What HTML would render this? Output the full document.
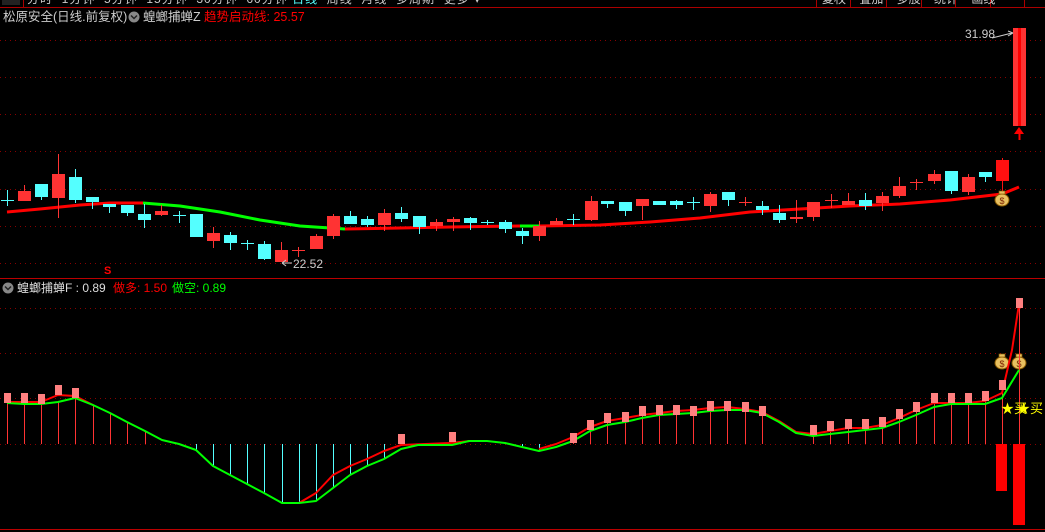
<!DOCTYPE html>
<html><head><meta charset="utf-8"><style>
html,body{margin:0;padding:0;background:#000;width:1045px;height:532px;overflow:hidden}
body{font-family:"Liberation Sans","Noto Sans CJK SC",sans-serif;position:relative}
.t{position:absolute;font-size:12px;white-space:nowrap;line-height:14px}
svg{position:absolute;left:0;top:0}
</style></head><body>
<svg id="s" width="1045" height="532" xmlns="http://www.w3.org/2000/svg"></svg>
<div class="t" style="left:27px;top:-8px;color:#ccc;letter-spacing:1px">分时 &nbsp;1分钟 &nbsp;5分钟 &nbsp;15分钟 &nbsp;30分钟 &nbsp;60分钟 <span style="color:#5ff">日线</span> &nbsp;周线 &nbsp;月线 &nbsp;多周期 &nbsp;更多 ▾</div>
<div class="t" style="left:822px;top:-8px;color:#ccc;word-spacing:10px">复权 叠加 多股 统计 画线 ・・・ 帮</div>
<div class="t" style="left:3px;top:10px;color:#ccc;font-size:12.5px">松原安全(日线.前复权)</div>
<div class="t" style="left:143px;top:10px;color:#ccc;font-size:12.5px">蝗螂捕蝉Z</div>
<div class="t" style="left:204px;top:10px;color:#f00;font-size:12.5px">趋势启动线: 25.57</div>
<div class="t" style="left:965px;top:27px;color:#ccc">31.98</div>
<div class="t" style="left:293px;top:257px;color:#ccc">22.52</div>
<div class="t" style="left:104px;top:264px;color:#f00;font-size:11px;font-weight:bold">S</div>
<div class="t" style="left:17px;top:281px;color:#ddd">蝗螂捕蝉F :<span> 0.89</span></div>
<div class="t" style="left:113px;top:281px;color:#f00">做多: 1.50</div>
<div class="t" style="left:172px;top:281px;color:#0f0">做空: 0.89</div>
<div class="t" style="left:1001px;top:402px;color:#ff0;font-size:13px">★买</div>
<div class="t" style="left:1017px;top:402px;color:#ff0;font-size:13px">★买</div>
<script>
var s=document.getElementById('s'),h='';
function L(x1,y1,x2,y2,c,w,d){h+='<line x1="'+x1+'" y1="'+y1+'" x2="'+x2+'" y2="'+y2+'" stroke="'+c+'" stroke-width="'+(w||1)+'"'+(d?' stroke-dasharray="'+d+'"':'')+'/>';}
function R(x,y,w,hh,c){h+='<rect x="'+x+'" y="'+y+'" width="'+w+'" height="'+hh+'" fill="'+c+'"/>';}
function P(pts,c,w){h+='<polyline points="'+pts.map(p=>p.join(',')).join(' ')+'" fill="none" stroke="'+c+'" stroke-width="'+w+'" stroke-linejoin="round"/>';}
function icon(x,y){h+='<circle cx="'+x+'" cy="'+y+'" r="5.5" fill="#888"/><polyline points="'+(x-3)+','+(y-1.5)+' '+x+','+(y+1.5)+' '+(x+3)+','+(y-1.5)+'" fill="none" stroke="#222" stroke-width="1.5"/>';}
// header
L(0,7.5,1045,7.5,'#a00',1);L(23.5,0,23.5,7,'#a00');
[816,850,886,921,955,990,1024].forEach(x=>L(x+.5,0,x+.5,7,'#a00'));
R(2,0,18,5,'#222');
icon(134,17);icon(8,288);
// grids
[40,77,114,151,189,226,263].forEach(y=>L(0,y+.5,1045,y+.5,'#800','1','1 4'));
[308,353,398,444].forEach(y=>L(0,y+.5,1045,y+.5,'#800','1','1 4'));
L(0,278.5,1045,278.5,'#b00',1);L(0,529.5,1045,529.5,'#b00',1);
// MA line top
P([[7,212],[40,209],[80,205],[110,203],[143,203]],'#f00',3);
P([[143,203],[180,206],[220,212],[260,220],[300,226],[330,228],[345,229]],'#0f0',3);
P([[345,229],[400,228],[450,227],[520,226]],'#f00',3);
P([[520,226],[540,226]],'#0f0',3);
P([[540,226],[600,225],[650,222],[700,218],[750,212],[800,209],[850,206],[900,204],[950,200],[1002,194],[1019,187]],'#f00',3);
var C=[[7,200,200,190,206,'c'],[24,191,201,185,201,'r'],[41,184,197,184,200,'c'],[58,174,198,154,218,'r'],[75,177,200,169,203,'c'],[92,197,202,197,209,'c'],[109,204,207,204,213,'c'],[127,205,213,205,216,'c'],[144,214,220,204,228,'c'],[161,211,215,205,216,'r'],[179,215,215,211,223,'c'],[196,214,237,214,237,'c'],[213,233,241,227,248,'r'],[230,235,243,232,250,'c'],[247,243,243,240,250,'c'],[264,244,259,241,260,'c'],[281,250,262,242,262,'r'],[298,250,250,247,257,'r'],[316,236,249,234,249,'r'],[333,216,236,214,239,'r'],[350,216,224,211,224,'c'],[367,219,225,216,227,'c'],[384,213,225,209,231,'r'],[401,213,219,207,222,'c'],[419,216,227,216,234,'c'],[436,222,226,219,231,'r'],[453,219,222,217,231,'r'],[470,218,223,217,230,'c'],[487,222,222,220,225,'c'],[505,222,229,220,233,'c'],[522,231,236,228,244,'c'],[539,226,236,221,241,'r'],[556,221,225,218,225,'r'],[573,219,219,214,225,'c'],[591,201,220,196,221,'r'],[607,201,204,201,208,'c'],[625,202,211,202,216,'c'],[642,199,206,199,220,'r'],[659,201,205,201,205,'c'],[676,201,205,200,209,'c'],[693,202,202,197,210,'c'],[710,194,206,192,212,'r'],[728,192,200,192,206,'c'],[745,202,202,197,206,'r'],[762,206,210,201,215,'c'],[779,213,220,205,223,'c'],[796,217,219,200,223,'r'],[813,202,217,202,221,'r'],[831,200,200,194,208,'r'],[848,201,205,193,205,'r'],[865,200,206,193,210,'c'],[882,196,203,192,211,'r'],[899,186,196,177,198,'r'],[916,182,182,179,190,'r'],[934,174,181,170,184,'r'],[951,171,191,171,194,'c'],[968,177,192,174,195,'r'],[985,172,177,172,182,'c'],[1002,160,181,158,191,'R']];
C.forEach(c=>{var col=c[5]=='c'?'#54ffff':(c[5]=='R'?'#ff1010':'#ff3333');
L(c[0]+.5,c[3],c[0]+.5,c[4],col,1);
if(c[1]==c[2])L(c[0]-6,c[1]+.5,c[0]+7,c[1]+.5,col,1);else R(c[0]-6,c[1],13,c[2]-c[1],col);});
R(1013,28,13,98,'#ff3333');R(1018,28,3,98,'#f00');
h+='<polygon points="1019,127 1014,134 1024,134" fill="#f00"/>';L(1019.5,133,1019.5,140,'#f00',2);
L(992,38,1012,33,'#ccc',1);L(1008,31,1013,33,'#ccc',1);L(1008,36,1013,33,'#ccc',1);
L(282,263,292,263,'#ccc',1);L(282,263,286,260,'#ccc');L(282,263,286,266,'#ccc');
function bag(x,y){h+='<ellipse cx="'+x+'" cy="'+(y+2)+'" rx="7" ry="6" fill="#e8c060" stroke="#8a5a00"/><rect x="'+(x-3)+'" y="'+(y-7)+'" width="6" height="3" fill="#e8c060" stroke="#8a5a00" stroke-width=".7"/><text x="'+x+'" y="'+(y+6)+'" font-size="9" text-anchor="middle" fill="#7a2000" font-family="Liberation Sans">$</text>';}
bag(1002,198);bag(1002,361);bag(1019,361);
var G=[[7,403],[24,404],[41,404],[58,402],[75,398],[93,405],[110,413],[127,422],[145,431],[162,440],[179,444],[196,450],[213,466],[230,475],[247,484],[264,493],[282,503],[299,503],[316,501],[333,488],[350,475],[367,466],[384,459],[401,449],[418,445],[452,445],[469,441],[487,441],[505,443],[522,447],[539,451],[556,447],[573,441],[590,431],[607,425],[625,422],[642,418],[659,415],[676,414],[693,413],[710,411],[727,410],[745,410],[762,413],[779,422],[796,433],[813,436],[830,434],[848,432],[865,430],[882,428],[899,422],[916,415],[934,407],[951,404],[968,404],[985,404],[1002,398],[1019,370]];
var Rd=[[7,402],[24,402],[41,402],[58,395],[75,396],[93,405]];
var Rd2=[[299,503],[316,493],[333,475],[350,466],[367,459],[384,451],[401,445],[450,443],[470,441]];
var Rd3=[[539,449],[556,444],[573,437],[590,427],[607,421],[625,418],[642,415],[659,413],[676,411],[693,410],[710,408],[727,407],[745,409],[762,412],[779,421],[796,432],[813,434],[830,431],[848,428],[865,428],[882,425],[899,418],[916,410],[934,403],[951,403],[968,403],[985,401],[1002,393],[1012,350],[1019,304]];
[7,24,41,58,75,93,110,127,145].forEach(x=>{var y=G.find(p=>p[0]==x)[1];L(x+.5,y,x+.5,444,'#ff3333',1);});
[196,213,230,247,264,282,299,316,333,350,367,384,522,539].forEach(x=>{var y=G.find(p=>p[0]==x)[1];L(x+.5,444,x+.5,y,'#54ffff',1);});
var Q=[[7,393],[24,393],[41,394],[58,385],[75,388],[401,434],[452,432],[573,433],[590,420],[607,413],[625,412],[642,406],[659,405],[676,405],[693,406],[710,401],[727,401],[745,402],[762,406],[813,425],[830,421],[848,419],[865,419],[882,417],[899,409],[916,402],[934,393],[951,393],[968,393],[985,391],[1002,380],[1019,298]];
Q.forEach(q=>{if(q[0]>540)L(q[0]+.5,q[1]+10,q[0]+.5,444,'#ff3333',1);});
P(Rd,'#f00',2);P(Rd2,'#f00',2);P(Rd3,'#f00',2);P(G,'#0f0',2);
Q.forEach(q=>R(q[0]-3,q[1],7,10,'#ff8080'));
R(996,444,11,47,'#f00');R(1013,444,12,81,'#f00');
s.innerHTML=h;
</script>
</body></html>
